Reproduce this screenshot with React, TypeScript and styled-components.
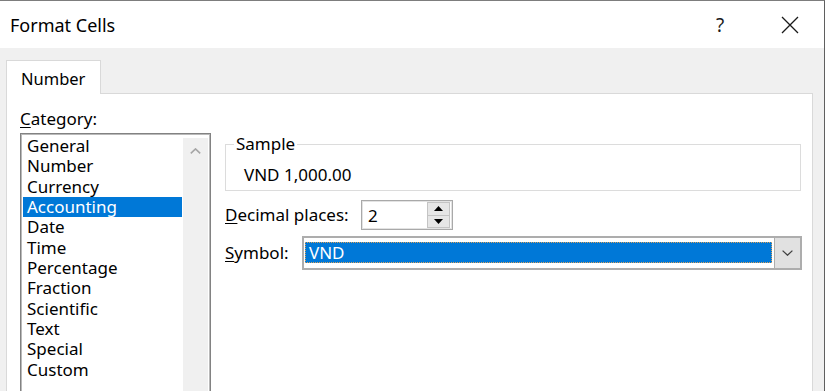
import React from 'react';
import styled, { createGlobalStyle } from 'styled-components';

const GlobalStyle = createGlobalStyle`
  html, body {
    margin: 0;
    padding: 0;
    background: #fff;
  }
  body {
    font-family: "Noto Sans", "Open Sans", "DejaVu Sans", sans-serif;
    color: #000;
  }
`;

const categories = [
  'General',
  'Number',
  'Currency',
  'Accounting',
  'Date',
  'Time',
  'Percentage',
  'Fraction',
  'Scientific',
  'Text',
  'Special',
  'Custom',
];

// Window frame
const Window = styled.div`
  width: 825px;
  height: 391px;
  box-sizing: border-box;
  border-top: 1px solid #7d7d7d;
  border-right: 1px solid #5f5f5f;
  display: flex;
  flex-direction: column;
  overflow: hidden;
`;

const TitleBar = styled.div`
  height: 47px;
  flex-shrink: 0;
  background: #fff;
  display: flex;
  align-items: center;
  padding: 0 11px 0 10px;
`;

const Title = styled.span`
  font-size: 18px;
  color: #000;
`;

const TitleButtons = styled.div`
  margin-left: auto;
  display: flex;
  gap: 24px;
`;

const TitleButton = styled.div`
  width: 46px;
  height: 30px;
  display: flex;
  align-items: center;
  justify-content: center;
  font-size: 19px;
  color: #1a1a1a;
`;

const Body = styled.div`
  flex: 1;
  background: #f0f0f0;
  padding: 12px 11px 0 6px;
  display: flex;
  flex-direction: column;
`;

const TabStrip = styled.div`
  display: flex;
  height: 33px;
  flex-shrink: 0;
`;

const Tab = styled.div`
  width: 95px;
  height: 34px;
  box-sizing: border-box;
  background: #fff;
  border: 1px solid #d9d9d9;
  border-bottom: none;
  position: relative;
  z-index: 1;
  display: flex;
  align-items: center;
  padding: 1px 0 0 14px;
  font-size: 16.5px;
`;

const Panel = styled.div`
  flex: 1;
  background: #fff;
  border: 1px solid #d9d9d9;
  border-bottom: none;
  display: flex;
  padding: 15px 10px 0 13px;
`;

// Category column
const LeftColumn = styled.div`
  width: 191px;
  display: flex;
  flex-direction: column;
`;

const Label = styled.div<{ $width?: number }>`
  font-size: 17px;
  line-height: 20px;
  flex-shrink: 0;
  width: ${({ $width }) => ($width ? `${$width}px` : 'auto')};
`;

const Key = styled.span`
  text-decoration: underline;
  text-underline-offset: 2px;
  text-decoration-thickness: 1px;
`;

const ListBox = styled.div`
  margin-top: 4px;
  height: 280px;
  box-sizing: border-box;
  border: 1px solid #828282;
  box-shadow: inset 0 0 0 1px #b9b9b9;
  display: flex;
  padding: 2px 2px 0 2px;
`;

const ListItems = styled.div`
  flex: 1;
  padding: 0 1px 0 0;
`;

const ListItem = styled.div<{ $selected?: boolean }>`
  height: 20.33px;
  line-height: 20.33px;
  padding-left: 4px;
  font-size: 17px;
  background: ${({ $selected }) => ($selected ? '#0078d7' : 'transparent')};
  color: ${({ $selected }) => ($selected ? '#fff' : '#000')};
`;

const ScrollTrack = styled.div`
  width: 25px;
  margin-top: 2px;
  background: #f0f0f0;
  display: flex;
  justify-content: center;
  padding-top: 10px;
  box-sizing: border-box;
`;

// Right side
const RightColumn = styled.div`
  width: 577px;
  margin: 25px 0 0 14px;
  display: flex;
  flex-direction: column;
`;

const SampleGroup = styled.fieldset`
  margin: 0 1px 0 0;
  padding: 0 0 5px 0;
  border: 1px solid #dcdcdc;
  min-width: 0;
`;

const Legend = styled.legend`
  margin-left: 8px;
  padding: 0 2px;
  font-size: 17px;
  line-height: 20px;
`;

const SampleText = styled.div`
  padding: 11px 0 0 18px;
  font-size: 17px;
  line-height: 20px;
`;

const FieldRow = styled.div<{ $top: number; $height: number }>`
  display: flex;
  align-items: center;
  margin-top: ${({ $top }) => $top}px;
  height: ${({ $height }) => $height}px;
`;

const SpinBox = styled.div`
  width: 92px;
  height: 30px;
  box-sizing: border-box;
  border: 1px solid #a9a9a9;
  box-shadow: inset 0 0 0 1px #e3e3e3;
  display: flex;
  align-items: center;
  padding: 0 2px 0 6px;
`;

const SpinValue = styled.span`
  flex: 1;
  font-size: 17px;
`;

const Spinner = styled.div`
  width: 23px;
  height: 26px;
  display: flex;
  flex-direction: column;
`;

const SpinButton = styled.div`
  flex: 1;
  background: #e6e6e6;
  border: 1px solid #c4c4c4;
  display: flex;
  align-items: center;
  justify-content: center;
  & + & {
    border-top: none;
  }
`;

const Select = styled.div`
  flex: 1;
  height: 34px;
  box-sizing: border-box;
  border: 2px solid #adadad;
  background: #fff;
  display: flex;
  align-items: center;
  padding: 0 0 0 1px;
`;

const SelectValue = styled.div`
  flex: 1;
  height: 21px;
  margin-top: -2px;
  background: #0078d7;
  color: #fff;
  font-size: 17px;
  line-height: 21px;
  padding-left: 4px;
  outline: 1px dotted #d9a25b;
  outline-offset: -1px;
`;

const DropButton = styled.div`
  width: 27px;
  height: 32px;
  margin: 0 -1px 0 2px;
  box-sizing: border-box;
  background: #e1e1e1;
  border: 1px solid #adadad;
  display: flex;
  align-items: center;
  justify-content: center;
`;

const App: React.FC = () => {
  return (
    <>
      <GlobalStyle />
      <Window>
        <TitleBar>
          <Title>Format Cells</Title>
          <TitleButtons>
            <TitleButton>?</TitleButton>
            <TitleButton>
              <svg width="18" height="18" viewBox="0 0 18 18">
                <path d="M1 1L17 17M17 1L1 17" stroke="#1a1a1a" strokeWidth="1.3" />
              </svg>
            </TitleButton>
          </TitleButtons>
        </TitleBar>
        <Body>
          <TabStrip>
            <Tab>Number</Tab>
          </TabStrip>
          <Panel>
            <LeftColumn>
              <Label>
                <Key>C</Key>ategory:
              </Label>
              <ListBox>
                <ListItems>
                  {categories.map((c) => (
                    <ListItem key={c} $selected={c === 'Accounting'}>
                      {c}
                    </ListItem>
                  ))}
                </ListItems>
                <ScrollTrack>
                  <svg width="11" height="6" viewBox="0 0 11 6">
                    <path d="M0.8 5.3L5.5 0.9L10.2 5.3" fill="none" stroke="#a6a6a6" strokeWidth="1.6" />
                  </svg>
                </ScrollTrack>
              </ListBox>
            </LeftColumn>
            <RightColumn>
              <SampleGroup>
                <Legend>Sample</Legend>
                <SampleText>VND 1,000.00</SampleText>
              </SampleGroup>
              <FieldRow $top={9} $height={30}>
                <Label $width={136}>
                  <Key>D</Key>ecimal places:
                </Label>
                <SpinBox>
                  <SpinValue>2</SpinValue>
                  <Spinner>
                    <SpinButton>
                      <svg width="9" height="5" viewBox="0 0 9 5">
                        <path d="M0 5L4.5 0L9 5Z" fill="#000" />
                      </svg>
                    </SpinButton>
                    <SpinButton>
                      <svg width="9" height="5" viewBox="0 0 9 5">
                        <path d="M0 0L4.5 5L9 0Z" fill="#000" />
                      </svg>
                    </SpinButton>
                  </Spinner>
                </SpinBox>
              </FieldRow>
              <FieldRow $top={6} $height={34}>
                <Label $width={77}>
                  <Key>S</Key>ymbol:
                </Label>
                <Select>
                  <SelectValue>VND</SelectValue>
                  <DropButton>
                    <svg width="11" height="6" viewBox="0 0 11 6">
                      <path d="M0.6 0.6L5.5 5.2L10.4 0.6" fill="none" stroke="#404040" strokeWidth="1.3" />
                    </svg>
                  </DropButton>
                </Select>
              </FieldRow>
            </RightColumn>
          </Panel>
        </Body>
      </Window>
    </>
  );
};

export default App;
